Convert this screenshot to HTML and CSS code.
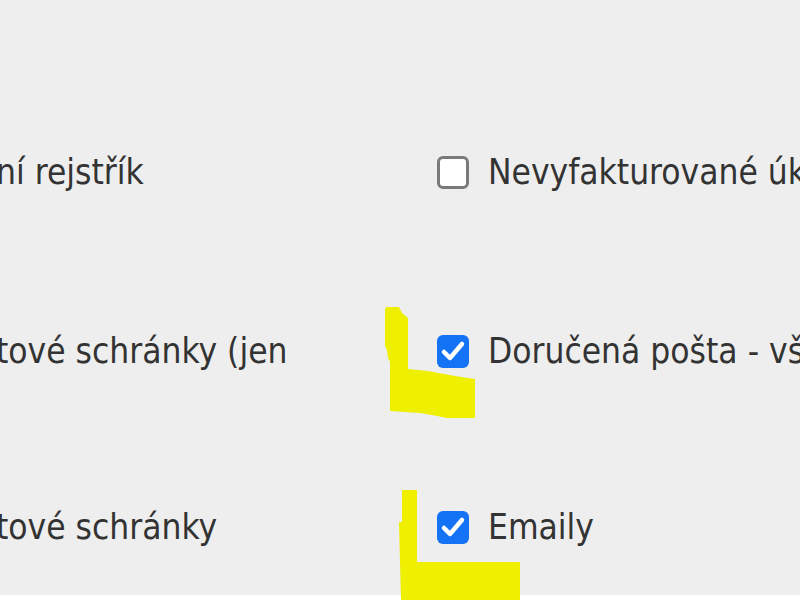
FILE: index.html
```html
<!DOCTYPE html>
<html lang="cs">
<head>
<meta charset="utf-8">
<title>Nastavení</title>
<link rel="stylesheet" href="styles.css">
</head>
<body>
<div class="page">
  <div class="grid">
    <div class="cell left"><span class="label cut">ní rejstřík</span></div>
    <div class="cell right">
      <span class="box"></span>
      <span class="label">Nevyfakturované úkony</span>
    </div>
    <div class="cell left"><span class="label cut">tové schránky (jen</span></div>
    <div class="cell right">
      <span class="box checked"><svg viewBox="0 0 32 32"><path d="M7 17 L13 23 L25 9" /></svg></span>
      <span class="label">Doručená pošta - všechny</span>
    </div>
    <div class="cell left"><span class="label cut">tové schránky</span></div>
    <div class="cell right">
      <span class="box checked"><svg viewBox="0 0 32 32"><path d="M7 17 L13 23 L25 9" /></svg></span>
      <span class="label">Emaily</span>
    </div>
  </div>
  <svg class="marks" viewBox="0 0 800 600" preserveAspectRatio="none">
    <polygon points="386,307 399,307 402,313 408,318 408,369 428,371 455,376 475,379 475,418 447,418 432,415 420,413 390,411 390,362 388,358 387,350 385,346 385,310"/>
    <polygon points="402,490 417,490 417,562 520,562 520,600 401,600 399,522 402,522"/>
  </svg>
</div>
</body>
</html>
```

FILE: styles.css
```css
html, body {
  margin: 0;
  padding: 0;
  background: #ffffff;
}
.page {
  position: relative;
  width: 800px;
  height: 600px;
  background: #ffffff;
  overflow: hidden;
  font-family: "DejaVu Sans Condensed", "DejaVu Sans", sans-serif;
  font-size: 35px;
  color: #333333;
}
.grid {
  display: grid;
  grid-template-columns: 437px 1fr;
  grid-template-rows: 182px 176px 176px;
  padding-top: 81px;
  height: 595px;
  box-sizing: border-box;
  background: #eeeeee;
}
.cell {
  display: flex;
  align-items: center;
  white-space: nowrap;
  overflow: hidden;
}
.left .label.cut {
  margin-left: -4px;
}
.right {
  gap: 19px;
  overflow: visible;
}
.box {
  flex: none;
  box-sizing: border-box;
  width: 32px;
  height: 33px;
  border: 3px solid #7a7a7a;
  border-radius: 6px;
  background: #ffffff;
  display: flex;
  align-items: center;
  justify-content: center;
}
.box.checked {
  border: none;
  background: #1473f5;
}
.box svg {
  width: 32px;
  height: 32px;
}
.box svg path {
  fill: none;
  stroke: #ffffff;
  stroke-width: 4.5;
  stroke-linecap: round;
  stroke-linejoin: round;
}
.marks {
  position: absolute;
  left: 0;
  top: 0;
  width: 800px;
  height: 600px;
}
.marks polygon {
  fill: #efef00;
}
```
